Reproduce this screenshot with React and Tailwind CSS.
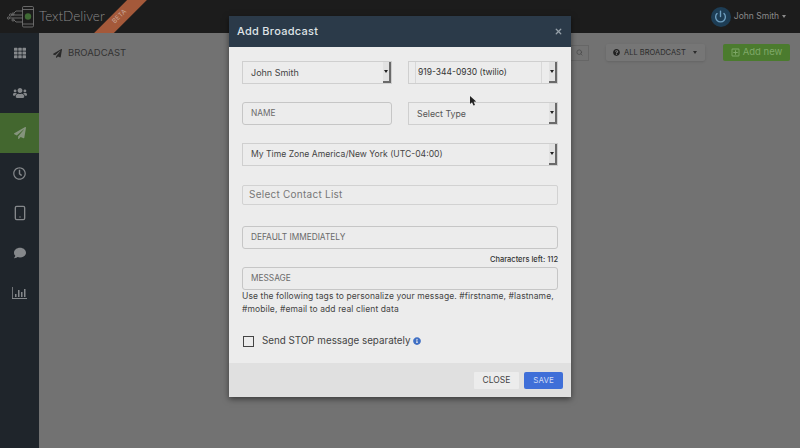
import React from 'react';
import { Search, X, Smartphone, Power } from 'lucide-react';
import { FaTh, FaUsers, FaPaperPlane, FaRegClock, FaComment, FaRegPlusSquare, FaQuestionCircle, FaInfoCircle } from 'react-icons/fa';

const FONT = "font-['Inter','Noto_Sans',sans-serif]";

function SideItem({ children, active }) {
  return (
    <div className={`h-10 flex items-center justify-center ${active ? 'bg-[#43672f] text-[#85947d]' : ''}`}>
      {children}
    </div>
  );
}

function Arrow() {
  return (
    <div className="w-[8px] h-full bg-[#e2e2e2] border-r-2 border-b-2 border-[#6a6a6a] flex items-center justify-center">
      <div className="w-0 h-0 border-x-[2px] border-x-transparent border-t-[3px] border-t-[#222]" />
    </div>
  );
}

function Select({ label, className = '', size = 'text-[8.6px]', color = 'text-[#444]' }) {
  return (
    <div className={`h-[23px] flex items-center bg-[#ececec] border border-[#cfcfcf] ${className}`}>
      <span className={`flex-1 pl-[8px] whitespace-nowrap ${size} ${color}`}>{label}</span>
      <Arrow />
    </div>
  );
}

function Field({ label, className = '' }) {
  return (
    <div className={`h-[23px] flex items-center pl-[8px] bg-[#ececec] border border-[#c6c6c6] rounded-[3px] text-[8.3px] text-[#6a6a6a] ${className}`}>
      {label}
    </div>
  );
}

export default function App() {
  return (
    <div className={`relative w-[800px] h-[448px] overflow-hidden bg-[#727272] ${FONT}`}>
      {/* barra do topo */}
      <header className="relative h-[33px] bg-[#1c1c1c] flex items-center justify-between overflow-hidden">
        <div className="flex items-center pl-[6px] gap-[5px]">
          <svg width="28" height="22" viewBox="0 0 28 22" fill="none" stroke="#7c7c7c" strokeWidth="0.8">
            <rect x="16.5" y="0.5" width="11" height="20.5" rx="1.2" />
            <path d="M16.5 3.5H27.5M16.5 18H27.5" />
            <circle cx="22" cy="10.5" r="3.2" fill="#3f6a34" stroke="none" />
            <path d="M16.5 5H10L8 7M16.5 9H6M16.5 12H4M16.5 16H10L8 14" />
            <circle cx="7" cy="8" r="1.1" />
            <circle cx="4.5" cy="9" r="1.1" />
            <circle cx="2.5" cy="12" r="1.1" />
            <circle cx="7" cy="14" r="1.1" />
          </svg>
          <span className="font-['Lato',sans-serif] text-[13.5px] text-[#8a8a8a] font-light">TextDeliver</span>
        </div>
        <div className="absolute left-[85px] top-[10px] w-[70px] h-[14px] bg-[#a4593a] -rotate-45 flex items-center justify-center">
          <span className="text-[6.5px] text-[#c9a595] tracking-wide">BETA</span>
        </div>
        <div className="flex items-center pr-[14px] gap-[3px]">
          <div className="w-[20px] h-[20px] rounded-full bg-[#1d3d55] flex items-center justify-center">
            <Power size={13} strokeWidth={2.5} className="text-[#6f9fc0]" />
          </div>
          <span className="text-[8.5px] text-[#8b8b8b]">John Smith</span>
          <div className="w-0 h-0 border-x-[2.5px] border-x-transparent border-t-[3px] border-t-[#8b8b8b]" />
        </div>
      </header>

      <div className="flex h-[415px]">
        {/* menu lateral */}
        <aside className="w-[39px] bg-[#1f252b] flex flex-col text-[#85888b]">
          <SideItem><FaTh size={12} /></SideItem>
          <SideItem><FaUsers size={14} /></SideItem>
          <SideItem active><FaPaperPlane size={12} /></SideItem>
          <SideItem><FaRegClock size={13} /></SideItem>
          <SideItem><Smartphone size={16} strokeWidth={2} /></SideItem>
          <SideItem><FaComment size={12} /></SideItem>
          <SideItem>
            <svg width="15" height="12" viewBox="0 0 15 12" fill="currentColor">
              <path d="M0 0h.8v11H15v1H0z" />
              <rect x="3" y="7" width="1.5" height="3" />
              <rect x="6" y="3" width="1.5" height="7" />
              <rect x="9" y="5" width="1.5" height="5" />
              <rect x="12" y="2" width="1.5" height="8" />
            </svg>
          </SideItem>
        </aside>

        <main className="flex-1 h-[39px] flex items-center justify-between pl-[14px] pr-[10px]">
          <div className="flex items-center gap-[6px] pt-[1px]">
            <FaPaperPlane size={9} className="text-[#2a2a2a]" />
            <span className="text-[9.5px] text-[#333]">BROADCAST</span>
          </div>
          <div className="flex items-center">
            <div className="w-[20px] h-[16px] mr-[17px] border border-[#666] flex items-center justify-center">
              <Search size={7} className="text-[#444]" />
            </div>
            <div className="h-[17px] w-[99px] mr-[18px] rounded-[2px] bg-[#767676] flex items-center pl-[7px] gap-[4px] shadow-sm">
              <FaQuestionCircle size={7} className="text-[#222]" />
              <span className="text-[7.5px] text-[#2b2b2b]">ALL BROADCAST</span>
              <div className="ml-[3px] w-0 h-0 border-x-[2.5px] border-x-transparent border-t-[3px] border-t-[#2b2b2b]" />
            </div>
            <div className="h-[17px] w-[67px] rounded-[2px] bg-[#4b7b2e] flex items-center justify-center gap-[3px] text-[#7fa868]">
              <FaRegPlusSquare size={9} />
              <span className="text-[9.5px]">Add new</span>
            </div>
          </div>
        </main>
      </div>

      {/* modal */}
      <div className="absolute left-[229px] top-[16px] w-[342px] h-[381px] bg-[#ececec] shadow-[0_2px_6px_rgba(0,0,0,0.5)] flex flex-col">
        <div className="h-[31px] shrink-0 bg-[#2b3a49] flex items-center justify-between pl-[8px] pr-[8px]">
          <span className="text-[11px] text-[#dfe3e6] font-medium tracking-wide">Add Broadcast</span>
          <X size={9} strokeWidth={3.5} className="text-[#96a0a9]" />
        </div>

        <div className="flex-1 px-[13px] pt-[14px]">
          <div className="grid grid-cols-2 gap-x-[16px]">
            <Select label="John Smith" size="text-[9px]" />
            <div className="h-[23px] flex items-center bg-[#ececec] border border-[#cfcfcf] pl-[6px]">
              <span className="flex-1 h-full border-x border-[#d8d8d8] pl-[2px] flex items-center text-[8.5px] text-[#333]">919-344-0930 (twilio)</span>
              <div className="w-[7px]" />
              <Arrow />
            </div>
          </div>
          <div className="grid grid-cols-2 gap-x-[16px] mt-[18px]">
            <Field label="NAME" />
            <Select label="Select Type" size="text-[8.8px]" color="text-[#555]" />
          </div>
          <Select label="My Time Zone America/New York (UTC-04:00)" className="mt-[18px]" />
          <div className="mt-[19px] h-[20px] flex items-center pl-[6px] pb-[2px] border border-[#d2d2d2] rounded-[2px] text-[10px] tracking-wide text-[#777]">
            Select Contact List
          </div>
          <Field label="DEFAULT IMMEDIATELY" className="mt-[21px]" />
          <div className="h-[18px] pt-[4px] flex items-center justify-end text-[7.5px] font-medium text-[#333]">Characters left: 112</div>
          <Field label="MESSAGE" />
          <p className="text-[8.5px] leading-[13px] text-[#444] tracking-[0.1px]">
            Use the following tags to personalize your message. #firstname, #lastname, #mobile, #email to add real client data
          </p>
          <div className="mt-[18px] flex items-center">
            <div className="ml-[1px] w-[11px] h-[11px] border border-[#444] bg-[#ececec]" />
            <span className="ml-[8px] text-[9.8px] text-[#444]">Send STOP message separately</span>
            <FaInfoCircle size={8} className="ml-[3px] text-[#3f6fc4]" />
          </div>
        </div>

        <div className="h-[34px] shrink-0 bg-[#e0e0e0] flex items-center justify-end gap-[5px] pr-[8px]">
          <div className="w-[45px] h-[17px] rounded-[1px] bg-[#ececec] flex items-center justify-center text-[8.5px] text-[#444]">CLOSE</div>
          <div className="w-[39px] h-[17px] rounded-[2px] bg-[#3f6fd8] flex items-center justify-center text-[8px] text-[#cfdcf5]">SAVE</div>
        </div>
      </div>

      {/* cursor do mouse */}
      <svg className="absolute left-[470px] top-[96px]" width="7" height="10" viewBox="0 0 7 10">
        <path d="M0 0L0 8L2 6.3L3.5 9.5L5 9L3.6 5.8L6.2 5.6Z" fill="#222" />
      </svg>
    </div>
  );
}
